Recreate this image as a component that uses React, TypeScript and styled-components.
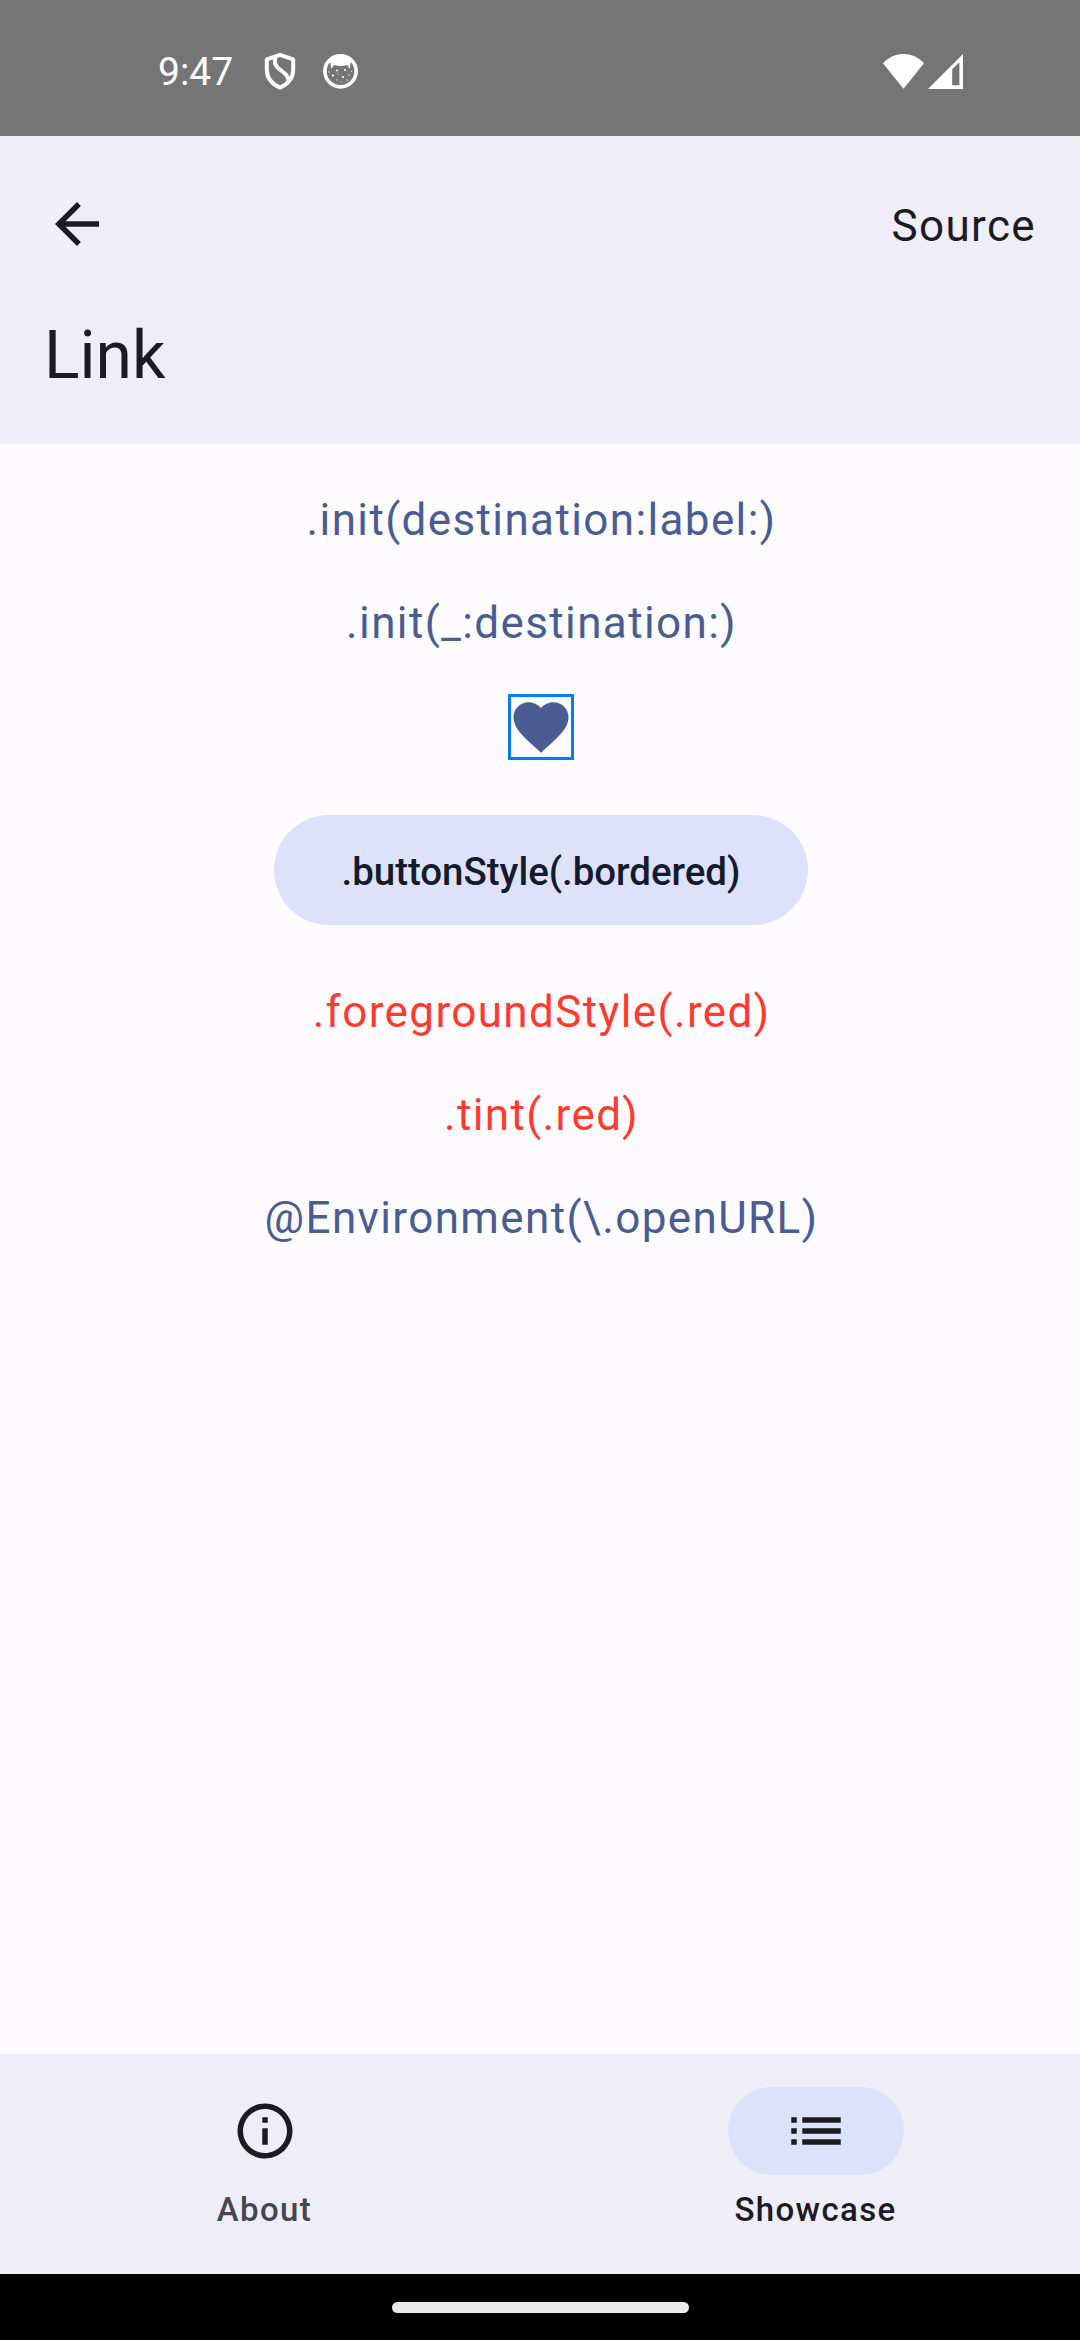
import React from "react";
import styled, { createGlobalStyle } from "styled-components";

const GlobalStyle = createGlobalStyle`
  *, *::before, *::after { box-sizing: border-box; }
  html, body { margin: 0; padding: 0; }
  body { font-family: Roboto, "Noto Sans", sans-serif; background: #fefbff; }
`;

const Screen = styled.div`
  width: 1080px;
  height: 2340px;
  display: flex;
  flex-direction: column;
  background: #fefbff;
  color: #1b1b21;
  overflow: hidden;
`;

const StatusBar = styled.header`
  height: 136px;
  flex: none;
  display: flex;
  align-items: flex-start;
  justify-content: space-between;
  padding: 48px 117px 0 158px;
  background: #757575;
  color: #fff;
`;

const StatusGroup = styled.div<{ $gap: number }>`
  display: flex;
  align-items: center;
  gap: ${(p) => p.$gap}px;
  height: 46px;
`;

const Clock = styled.span`
  width: 77px;
  font-size: 39px;
  line-height: 46px;
  padding-top: 2px;
`;

const Icon = styled.svg`
  display: block;
  flex: none;
  fill: currentColor;
`;

const AppBar = styled.div`
  flex: none;
  height: 308px;
  background: #efedf7;
  color: #1b1b21;
`;

const Toolbar = styled.div`
  height: 176px;
  display: flex;
  align-items: center;
  justify-content: space-between;
  padding: 0 44px;
`;

const PlainButton = styled.button`
  border: 0;
  padding: 0;
  background: none;
  color: inherit;
  font: inherit;
  cursor: pointer;
`;

const SourceButton = styled(PlainButton)`
  font-size: 44px;
  line-height: 66px;
  letter-spacing: 1.375px;
  padding-top: 4px;
`;

const Title = styled.h1`
  margin: 0;
  padding: 0 44px;
  font-size: 66px;
  line-height: 88px;
  font-weight: 400;
`;

const Content = styled.main`
  flex: 1;
  display: flex;
  flex-direction: column;
  align-items: center;
  gap: 44px;
  padding: 44px 0 0 2px;
`;

const TextLink = styled.a<{ $color: string }>`
  height: 59px;
  padding: 5px 0 0 1px;
  font-size: 44px;
  line-height: 54px;
  letter-spacing: 1.375px;
  white-space: nowrap;
  text-decoration: none;
  color: ${(p) => p.$color};
`;

const HeartLink = styled.a`
  display: flex;
  align-items: center;
  justify-content: center;
  width: 66px;
  height: 66px;
  border: 3px solid #007aff;
  color: #495d92;
`;

const BorderedButton = styled.button`
  width: 534px;
  height: 110px;
  margin: 11px 0;
  padding: 2px 0 0;
  border: 0;
  border-radius: 55px;
  background: #dde1f9;
  color: #151b2c;
  font-family: inherit;
  font-size: 38.5px;
  font-weight: 500;
  line-height: 55px;
  letter-spacing: -0.04px;
`;

const NavBar = styled.nav`
  flex: none;
  height: 220px;
  display: grid;
  grid-template-columns: 1fr 1fr;
  gap: 22px;
  background: #efedf7;
`;

const NavItem = styled.button<{ $active?: boolean }>`
  display: flex;
  flex-direction: column;
  align-items: center;
  gap: 13px;
  padding: 33px 0 0;
  border: 0;
  background: none;
  font-family: inherit;
  font-size: 33px;
  font-weight: 500;
  line-height: 44px;
  letter-spacing: 1.375px;
  color: ${(p) => (p.$active ? "#1b1b21" : "#45464f")};
`;

const Indicator = styled.span<{ $active?: boolean }>`
  display: flex;
  align-items: center;
  justify-content: center;
  width: 176px;
  height: 88px;
  border-radius: 44px;
  color: #1b1b21;
  background: ${(p) => (p.$active ? "#dde1f9" : "transparent")};
`;

const GestureBar = styled.footer`
  flex: none;
  height: 66px;
  display: flex;
  align-items: center;
  justify-content: center;
  background: #000;
`;

const GestureHandle = styled.div`
  width: 297px;
  height: 11px;
  border-radius: 6px;
  background: #ebebeb;
`;

const blue = "#495d92";
const red = "#ff3b30";

const ShieldIcon = () => (
  <Icon width="32" height="38" viewBox="0 0 32 38">
    <g fill="none" stroke="#fff" strokeWidth="4" strokeLinejoin="round">
      <path d="M16 2.8 L29.2 7.4 V17.5 C29.2 25.5 24 32 16 35.6 C8 32 2.8 25.5 2.8 17.5 V7.4 Z" />
      <path d="M11.4 4.8 C10.3 9 10.8 13 14 16 L20.6 21.3 C24 24.3 24.8 26 24.2 29" />
    </g>
  </Icon>
);

const FaceIcon = () => (
  <Icon width="35" height="36" viewBox="0 0 35 36">
    <circle cx="17.5" cy="18.3" r="15.6" fill="none" stroke="#fff" strokeWidth="3.6" />
    <path d="M6 7 C12 1.5 23 1.5 29 7 L27.5 10 L26.8 16 L24 12 C20 13.2 15 13.2 11 12 L8.2 16 L7.5 10 Z" />
    <g>
      <circle cx="14" cy="17.5" r="0.9" />
      <circle cx="22" cy="17" r="1.1" />
      <circle cx="10" cy="22.5" r="1.1" />
      <circle cx="20" cy="24" r="1.1" />
      <circle cx="26" cy="22" r="0.7" />
      <circle cx="15" cy="21" r="0.6" />
      <circle cx="14" cy="27" r="0.7" />
      <circle cx="24" cy="27" r="0.7" />
      <circle cx="6" cy="19" r="0.7" />
      <circle cx="28.5" cy="18.5" r="0.6" />
      <circle cx="18" cy="29" r="0.6" />
    </g>
  </Icon>
);

const WifiIcon = () => (
  <Icon width="41" height="35" viewBox="0 0 41 35">
    <path d="M0 9.3 C11.5 -3.1 29.5 -3.1 41 9.3 L20.5 34.7 Z" />
  </Icon>
);

const SignalIcon = () => (
  <Icon width="35" height="35" viewBox="0 0 35 35">
    <path fillRule="evenodd" d="M0 35 L35 0 V35 Z M24.2 15.2 V31.2 H31.4 V8.2 Z" />
  </Icon>
);

export default function App() {
  return (
    <>
      <GlobalStyle />
      <Screen>
        <StatusBar>
          <StatusGroup $gap={29}>
            <Clock>9:47</Clock>
            <StatusGroup $gap={27}>
              <ShieldIcon />
              <FaceIcon />
            </StatusGroup>
          </StatusGroup>
          <StatusGroup $gap={4}>
            <WifiIcon />
            <SignalIcon />
          </StatusGroup>
        </StatusBar>

        <AppBar>
          <Toolbar>
            <PlainButton aria-label="Back">
              <Icon width="66" height="66" viewBox="0 0 24 24">
                <path d="M20 11H7.83l5.59-5.59L12 4l-8 8 8 8 1.41-1.41L7.83 13H20z" />
              </Icon>
            </PlainButton>
            <SourceButton>Source</SourceButton>
          </Toolbar>
          <Title>Link</Title>
        </AppBar>

        <Content>
          <TextLink $color={blue}>.init(destination:label:)</TextLink>
          <TextLink $color={blue}>.init(_:destination:)</TextLink>
          <HeartLink aria-label="Favorite">
            <Icon width="66" height="66" viewBox="0 0 24 24">
              <path d="M12 21.35l-1.45-1.32C5.4 15.36 2 12.28 2 8.5 2 5.42 4.42 3 7.5 3c1.74 0 3.41.81 4.5 2.09C13.09 3.81 14.76 3 16.5 3 19.58 3 22 5.42 22 8.5c0 3.78-3.4 6.86-8.55 11.54z" />
            </Icon>
          </HeartLink>
          <BorderedButton>.buttonStyle(.bordered)</BorderedButton>
          <TextLink $color={red}>.foregroundStyle(.red)</TextLink>
          <TextLink $color={red}>.tint(.red)</TextLink>
          <TextLink $color={blue}>@Environment(\.openURL)</TextLink>
        </Content>

        <NavBar>
          <NavItem>
            <Indicator>
              <Icon width="66" height="66" viewBox="0 0 24 24">
                <path d="M11 7h2v2h-2zm0 4h2v6h-2zm1-9C6.48 2 2 6.48 2 12s4.48 10 10 10 10-4.48 10-10S17.52 2 12 2m0 18c-4.41 0-8-3.59-8-8s3.59-8 8-8 8 3.59 8 8-3.59 8-8 8" />
              </Icon>
            </Indicator>
            About
          </NavItem>
          <NavItem $active>
            <Indicator $active>
              <Icon width="66" height="66" viewBox="0 0 24 24">
                <path d="M3 13h2v-2H3zm0 4h2v-2H3zm0-8h2V7H3zm4 4h14v-2H7zm0 4h14v-2H7zM7 7v2h14V7z" />
              </Icon>
            </Indicator>
            Showcase
          </NavItem>
        </NavBar>

        <GestureBar>
          <GestureHandle />
        </GestureBar>
      </Screen>
    </>
  );
}
